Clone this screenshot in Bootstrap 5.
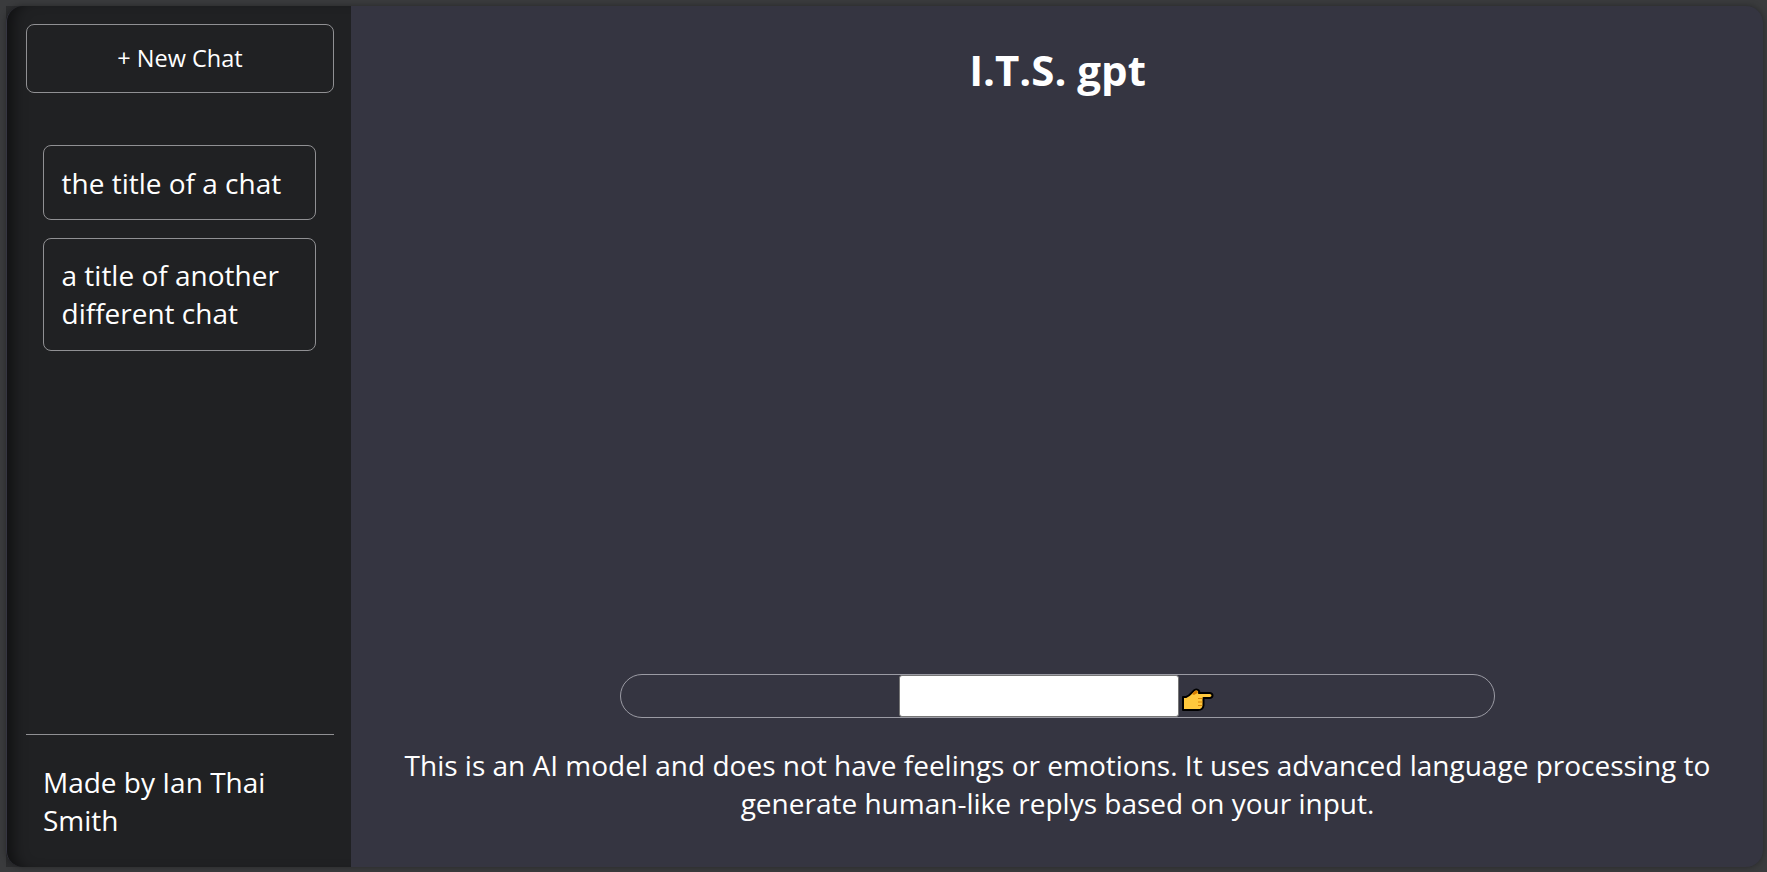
<!DOCTYPE html>
<html lang="en">
<head>
<meta charset="utf-8">
<title>I.T.S. gpt</title>
<link href="https://cdn.jsdelivr.net/npm/bootstrap@5.3.0/dist/css/bootstrap.min.css" rel="stylesheet">
<style>
html, body { height: 100%; }
body { background: #3a3b3d; color: #fff; font-family: "Open Sans", sans-serif; font-size: 28px; line-height: 38px; padding: 6px 4px 5px 6px; overflow: hidden; }
.frame { background: linear-gradient(90deg, #2b2c2e 0, #2e2f31 14px, #3a3b3d 40px); }
.shell { background: #353541; border-radius: 17px; box-shadow: 0 0 6px rgba(0,0,0,.35); }
.side { width: 344px; background: #202123; margin-left: 1px; padding: 18px 17px 28px 19px; border-radius: 16px 0 0 16px; box-shadow: inset 14px 0 14px -8px rgba(0,0,0,.5); }
.line-box { border: 1px solid #909093; border-radius: 8px; }
.new-chat { height: 69px; padding: 0 0 2px; font-size: 23.5px; color: #fff; background: transparent; }
.chats { margin: 52px 18px 0 17px; gap: 18px; }
.chat { padding: 17.5px 18px 17.5px 17.5px; }
.chat + .chat { padding-top: 17px; padding-bottom: 18px; }
.credit { border-top: 1px solid #909093; padding: 28px 17px 0; }
h1 { font-size: 42px; line-height: 57px; font-weight: 700; padding: 35px 0 0 1px; }
.ask { width: 875px; height: 44px; border: 1px solid #9b9ba4; border-radius: 22px; }
.ask input { width: 280px; height: 42px; border: 1px solid #767676; border-radius: 3px; background: #fff; outline: 0; }
.hand { width: 37px; height: 32px; }
.note { margin: 28px 0 45px; padding: 0 40px 0 41px; }
</style>
<script src="https://cdn.jsdelivr.net/npm/bootstrap@5.3.0/dist/js/bootstrap.bundle.min.js"></script>
</head>
<body>
<div class="frame h-100">
<div class="shell d-flex h-100">
  <aside class="side d-flex flex-column flex-shrink-0">
    <button class="new-chat line-box w-100">+ New Chat</button>
    <div class="chats d-flex flex-column">
      <div class="chat line-box">the title of a chat</div>
      <div class="chat line-box">a title of another different chat</div>
    </div>
    <div class="credit mt-auto">Made by Ian Thai Smith</div>
  </aside>
  <main class="d-flex flex-column align-items-center flex-grow-1 text-center">
    <h1 class="m-0">I.T.S. gpt</h1>
    <div class="ask d-flex align-items-center mt-auto">
      <input type="text" class="ms-auto" aria-label="Message">
      <svg class="hand me-auto flex-shrink-0" viewBox="1 0 37 32"><path d="M5 17H8C12 16 14 12 16.500 10C19 8.500 22 10.500 21 13H32Q34.500 13.500 34.500 15.500T32 18H25.500V25.500Q25 30 20 30H5Z" fill="#ffc83d" stroke="#000" stroke-width="2" stroke-linejoin="round"/><path d="M14 14Q16 11 18 10.500Q20.500 11 19.500 13L16 15Z" fill="#d67d00"/><path d="M20 18.500h4.500M20 22h4.500M20 25.500h4" stroke="#d67d00" stroke-width=".9"/></svg>
    </div>
    <p class="note">This is an AI model and does not have feelings or emotions. It uses advanced language processing to generate human-like replys based on your input.</p>
  </main>
</div>
</div>
</body>
</html>
